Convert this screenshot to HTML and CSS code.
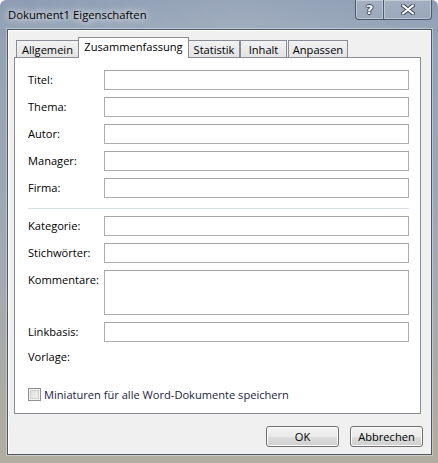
FILE: index.html
```html
<!DOCTYPE html>
<html lang="de">
<head>
<meta charset="utf-8">
<title>Dokument1 Eigenschaften</title>
<link rel="stylesheet" href="styles.css">
</head>
<body>
<div class="window">
  <div class="titlebar">
    <span class="title">Dokument1 Eigenschaften</span>
    <div class="caption-buttons">
      <div class="cap-btn cap-help"><span class="cap-q">?</span></div>
      <div class="cap-btn cap-close">
        <svg width="14" height="11" viewBox="0 0 14 11">
          <path d="M2 1.5 L12 9.5 M12 1.5 L2 9.5" stroke="#3b4658" stroke-width="4" stroke-linecap="round"/>
          <path d="M2 1.5 L12 9.5 M12 1.5 L2 9.5" stroke="#ffffff" stroke-width="2.2" stroke-linecap="round"/>
        </svg>
      </div>
    </div>
  </div>
  <div class="client">
    <div class="tabs">
      <div class="tab t-allgemein">Allgemein</div>
      <div class="tab tab-active t-zus">Zusammenfassung</div>
      <div class="tab t-stat">Statistik</div>
      <div class="tab t-inhalt">Inhalt</div>
      <div class="tab t-anp">Anpassen</div>
    </div>
    <div class="panel">
      <div class="form">
        <label class="lbl">Titel:</label><div class="field"></div>
        <label class="lbl">Thema:</label><div class="field"></div>
        <label class="lbl">Autor:</label><div class="field"></div>
        <label class="lbl">Manager:</label><div class="field"></div>
        <label class="lbl">Firma:</label><div class="field"></div>
        <div class="sep"></div>
        <label class="lbl">Kategorie:</label><div class="field"></div>
        <label class="lbl">Stichwörter:</label><div class="field"></div>
        <label class="lbl">Kommentare:</label><div class="field field-multi"></div>
        <label class="lbl">Linkbasis:</label><div class="field"></div>
        <label class="lbl lbl-plain">Vorlage:</label><div class="value"></div>
      </div>
      <div class="check-row">
        <span class="checkbox"></span>
        <span class="check-text">Miniaturen für alle Word-Dokumente speichern</span>
      </div>
    </div>
    <div class="buttons">
      <div class="btn">OK</div>
      <div class="btn">Abbrechen</div>
    </div>
  </div>
</div>
</body>
</html>
```

FILE: styles.css
```css
html, body {
  margin: 0;
  padding: 0;
}
body {
  width: 438px;
  height: 463px;
  overflow: hidden;
  font-family: "Open Sans", "Noto Sans", "DejaVu Sans", sans-serif;
  font-size: 11.1px;
  color: #000;
}
.window {
  width: 438px;
  height: 463px;
  box-sizing: border-box;
  display: flex;
  flex-direction: column;
  background: linear-gradient(to bottom, #8797ae 0px, #93a2b6 40px, #a1a9b2 250px, #b1ad9f 463px);
  border-radius: 6px 6px 0 0;
}
.titlebar {
  height: 29px;
  flex: none;
  display: flex;
  align-items: flex-start;
  justify-content: space-between;
  background: linear-gradient(to right, rgba(255,255,255,0.05), rgba(255,255,255,0.15) 55%, rgba(255,255,255,0.05));
}
.title {
  margin: 7px 0 0 8px;
  font-size: 11.3px;
  line-height: 16px;
  color: #000;
  text-shadow: 0 0 6px #ffffff, 0 0 10px rgba(255,255,255,0.8);
}
.caption-buttons {
  display: flex;
  margin-right: 6px;
}
.cap-btn {
  height: 19px;
  border: 1px solid #4c586c;
  border-top: none;
  box-shadow: inset 0 0 0 1px rgba(255,255,255,0.35);
  display: flex;
  align-items: center;
  justify-content: center;
  background: linear-gradient(to bottom, rgba(255,255,255,0.18), rgba(255,255,255,0.05));
}
.cap-help {
  width: 27px;
  border-radius: 0 0 0 4px;
}
.cap-close {
  width: 47px;
  border-left: none;
  border-radius: 0 0 4px 0;
}
.cap-q {
  font-family: "DejaVu Sans", sans-serif;
  font-weight: bold;
  font-size: 13px;
  color: #fff;
  line-height: 14px;
  text-shadow: 1px 0 0 #3b4658, -1px 0 0 #3b4658, 0 1px 0 #3b4658, 0 -1px 0 #3b4658;
}
.client {
  flex: 1;
  margin: 0 6px 8px 7px;
  border: 1px solid #4f5766;
  box-shadow: 0 0 0 1px rgba(255,255,255,0.35), inset 1px 1px 0 #ffffff;
  background: #f0f0f0;
  display: flex;
  flex-direction: column;
}
.tabs {
  display: flex;
  align-items: flex-end;
  height: 28px;
  padding-left: 8px;
  position: relative;
  z-index: 1;
}
.tab {
  box-sizing: border-box;
  height: 17px;
  margin-bottom: 1px;
  border: 1px solid #898c95;
  border-bottom: none;
  background: linear-gradient(to bottom, #f2f2f2, #e3e3e3);
  display: flex;
  align-items: center;
  justify-content: center;
  line-height: 14px;
  padding-top: 1px;
}
.t-allgemein { width: 63px; }
.t-zus {
  width: 111px;
  margin-left: -1px;
}
.t-stat { width: 52px; margin-left: -1px; }
.t-inhalt { width: 47px; margin-left: 0; }
.t-anp { width: 60px; margin-left: 1px; }
.tab-active {
  height: 21px;
  margin-bottom: 0;
  background: #ffffff;
  padding-top: 0;
  padding-bottom: 2px;
}
.panel {
  margin: -1px 10px 0 6px;
  height: 357px;
  box-sizing: border-box;
  border: 1px solid #898c95;
  background: #ffffff;
  padding: 12px 11px 0 13px;
}
.form {
  display: grid;
  grid-template-columns: 76px 1fr;
  row-gap: 7px;
}
.lbl {
  line-height: 20px;
  align-self: start;
}
.lbl-plain {
  line-height: 14px;
  padding-top: 1px;
}
.field {
  height: 20px;
  box-sizing: border-box;
  border: 1px solid #abadb3;
  border-top-color: #a3a5ab;
  background: #fff;
}
.field-multi {
  height: 45px;
}
.sep {
  grid-column: 1 / 3;
  height: 1px;
  background: #d5dfe5;
  margin-top: 3px;
}
.value {
  height: 14px;
}
.check-row {
  display: flex;
  align-items: center;
  margin-top: 24px;
  height: 13px;
}
.checkbox {
  width: 13px;
  height: 13px;
  box-sizing: border-box;
  border: 1px solid #8e8f8f;
  background: linear-gradient(135deg, #dcdcdc, #f6f6f6);
  box-shadow: inset 0 0 0 1px #f4f4f4, inset 0 0 0 2px #cfcfcf;
  flex: none;
}
.check-text {
  margin-left: 3px;
  color: #1c1c44;
  line-height: 14px;
}
.buttons {
  display: flex;
  justify-content: flex-end;
  gap: 11px;
  margin: 12px 8px 0 0;
}
.btn {
  width: 73px;
  height: 21px;
  box-sizing: border-box;
  border: 1px solid #707070;
  border-radius: 3px;
  background: linear-gradient(to bottom, #f2f2f2 0%, #ebebeb 50%, #dddddd 51%, #cfcfcf 100%);
  box-shadow: inset 0 0 0 1px #fcfcfc;
  display: flex;
  align-items: center;
  justify-content: center;
  line-height: 14px;
}
```
